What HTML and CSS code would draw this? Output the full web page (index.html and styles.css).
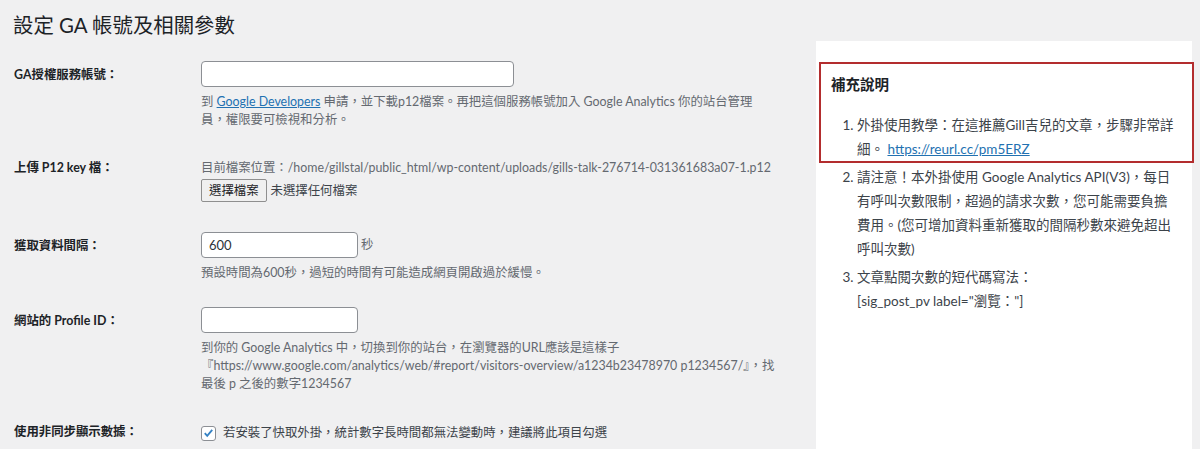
FILE: index.html
```html
<!DOCTYPE html>
<html lang="zh-Hant">
<head>
    <meta charset="UTF-8">
    <meta name="viewport" content="width=device-width, initial-scale=1.0">
    <title>設定 GA 帳號及相關參數</title>
    <link rel="stylesheet" href="styles.css">
</head>
<body>
    <div class="wrap">
        <div class="main">
            <h1>設定 GA 帳號及相關參數</h1>
            <div class="form">
                <div class="row">
                    <div class="label boxed">GA授權服務帳號：</div>
                    <div class="field">
                        <input class="text wide" type="text">
                        <p class="desc">到 <a href="#">Google Developers</a> 申請，並下載p12檔案。再把這個服務帳號加入 Google Analytics 你的站台管理員，權限要可檢視和分析。</p>
                    </div>
                </div>

                <div class="row">
                    <div class="label">上傳 P12 key 檔：</div>
                    <div class="field">
                        <div class="path">目前檔案位置：/home/gillstal/public_html/wp-content/uploads/gills-talk-276714-031361683a07-1.p12</div>
                        <div class="file">
                            <button class="file-btn" type="button">選擇檔案</button>
                            <span class="file-name">未選擇任何檔案</span>
                        </div>
                    </div>
                </div>

                <div class="row">
                    <div class="label boxed">獲取資料間隔：</div>
                    <div class="field">
                        <div class="inline">
                            <input class="text short" type="text" value="600">
                            <span class="unit">秒</span>
                        </div>
                        <p class="desc">預設時間為600秒，過短的時間有可能造成網頁開啟過於緩慢。</p>
                    </div>
                </div>

                <div class="row tight">
                    <div class="label boxed">網站的 Profile ID：</div>
                    <div class="field">
                        <input class="text short" type="text">
                        <p class="desc">到你的 Google Analytics 中，切換到你的站台，在瀏覽器的URL應該是這樣子『https://www.google.com/analytics/web/#report/visitors-overview/a1234b23478970 p1234567/』，找最後 p 之後的數字1234567</p>
                    </div>
                </div>

                <div class="row">
                    <div class="label">使用非同步顯示數據：</div>
                    <div class="field">
                        <label class="check">
                            <span class="check-box">
                                <svg width="14" height="14" viewBox="0 0 14 14"><path d="M3 7.2l2.6 2.8L11 3.6" fill="none" stroke="#3582c4" stroke-width="2"/></svg>
                            </span>
                            若安裝了快取外掛，統計數字長時間都無法變動時，建議將此項目勾選
                        </label>
                    </div>
                </div>
            </div>
        </div>

        <aside class="side">
            <div class="notice">
                <h2>補充說明</h2>
                <ol>
                    <li>外掛使用教學：在這推薦Gill吉兒的文章，步驟非常詳細。 <a href="#">https://reurl.cc/pm5ERZ</a></li>
                </ol>
            </div>
            <ol class="more" start="2">
                <li>請注意！本外掛使用 Google Analytics API(V3)，每日有呼叫次數限制，超過的請求次數，您可能需要負擔費用。(您可增加資料重新獲取的間隔秒數來避免超出呼叫次數)</li>
                <li>文章點閱次數的短代碼寫法：<br>[sig_post_pv label="瀏覽："]</li>
            </ol>
        </aside>
    </div>
</body>
</html>
```

FILE: styles.css
```css
body {
    margin: 0;
    background: #f0f0f1;
    color: #3c434a;
    font-family: Lato, "Noto Sans CJK TC", sans-serif;
    font-size: 12.4px;
}
a {
    color: #2271b1;
}
.wrap {
    display: flex;
    gap: 26px;
    padding: 0 8px 0 14px;
}
.main {
    width: 776px;
    flex: none;
}
h1 {
    font-size: 20.4px;
    font-weight: 400;
    line-height: 30px;
    margin: 10px 0 6px -1px;
    color: #1d2327;
}
.row {
    display: grid;
    grid-template-columns: 187px 574px;
    padding: 15px 0;
}
.row.tight {
    padding-top: 10px;
}
.label {
    font-weight: 700;
    color: #1d2327;
    line-height: 18px;
    height: 18px;
}
.label.boxed {
    padding-top: 5px;
}
.field {
    line-height: 18px;
}
.text {
    display: block;
    box-sizing: border-box;
    height: 26px;
    border: 1px solid #8c8f94;
    border-radius: 4px;
    background: #fff;
    padding: 0 7px;
    font: inherit;
    font-size: 13px;
    color: #2c3338;
    margin: 0;
}
.text.wide {
    width: 313px;
}
.text.short {
    width: 157px;
}
.desc {
    margin: 6px 0 0;
    color: #646970;
}
.path {
    color: #646970;
    height: 18px;
}
.file {
    display: flex;
    align-items: center;
    gap: 4px;
    margin-top: 2px;
    height: 23px;
}
.file-btn {
    height: 23px;
    padding: 0 7px;
    border: 1px solid #8f8f8f;
    border-radius: 2px;
    background: #f0f0f0;
    font: inherit;
    color: #1d2327;
}
.file-name {
    color: #3c434a;
}
.inline {
    display: flex;
    align-items: center;
    gap: 3px;
}
.unit {
    color: #646970;
}
.check {
    display: flex;
    align-items: center;
    gap: 7px;
    color: #3c434a;
    height: 18px;
    margin-top: 1px;
}
.check-box {
    box-sizing: border-box;
    width: 15px;
    height: 15px;
    border: 1px solid #8c8f94;
    border-radius: 3px;
    background: #fff;
    display: flex;
    align-items: center;
    justify-content: center;
}
.check-box svg {
    display: block;
}
.side {
    width: 376px;
    flex: none;
    background: #fff;
    margin-top: 41px;
    min-height: 408px;
    box-sizing: border-box;
    padding: 21px 0 0 0;
    font-size: 13.5px;
    line-height: 24px;
}
.notice {
    border: 2px solid #b32d2e;
    margin: 0 -2px 0 3px;
    padding: 11px 17px 0 10px;
}
h2 {
    font-size: 14.5px;
    font-weight: 700;
    color: #1d2327;
    margin: 0;
    line-height: 20px;
}
.side ol {
    margin: 0;
    padding-left: 26px;
}
.notice ol {
    margin-top: 18px;
}
.side li + li {
    margin-top: 4px;
}
.side ol.more {
    margin-top: 2px;
    padding-left: 41px;
    padding-right: 17px;
}
```
